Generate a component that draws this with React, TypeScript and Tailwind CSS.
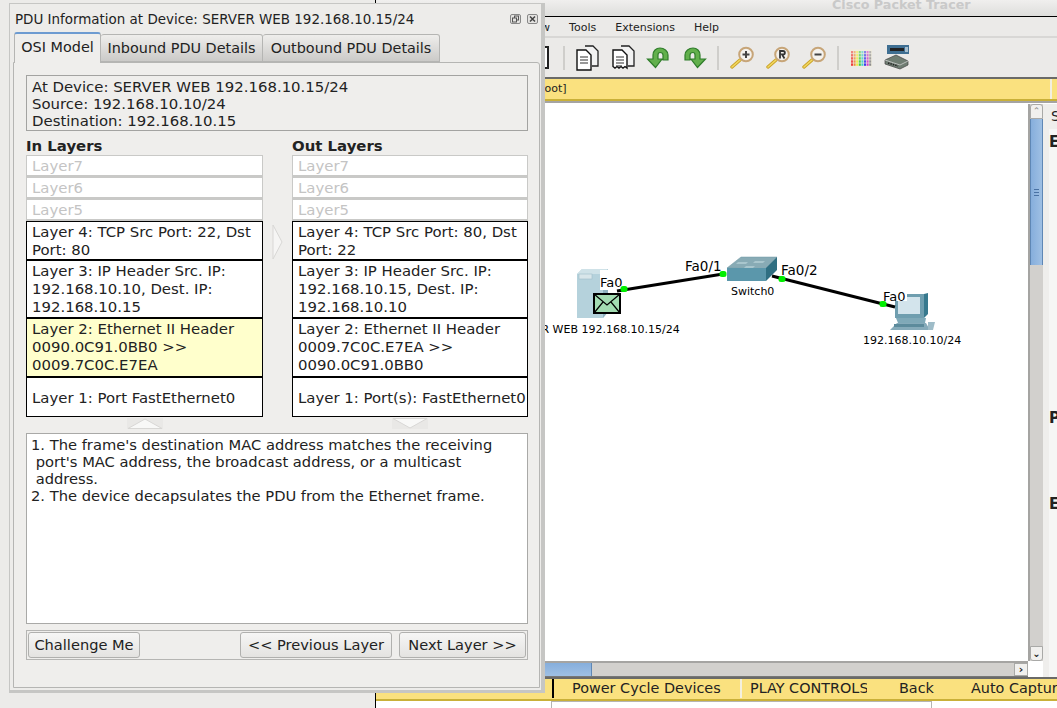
import React from "react";

const font = { fontFamily: '"DejaVu Sans", sans-serif' };

function Faded({ label }: { label: string }) {
  return (
    <div className="h-[22px] border border-[#c9c9c7] border-b-2 bg-white pl-[5px] pt-[1px] leading-[19px] text-[#c4c4c4]">{label}</div>
  );
}

function Row({ h, active, center, lines }: { h: string; active?: boolean; center?: boolean; lines: string[] }) {
  return (
    <div className={`${h} border border-black pl-[5px] leading-[18px] whitespace-pre ${active ? "bg-[#ffffcc]" : "bg-white"} ${center ? "flex items-center pt-[1px]" : "pt-[1px]"}`}>
      <div>
        {lines.map((l) => (
          <div key={l}>{l}</div>
        ))}
      </div>
    </div>
  );
}

function Column({ title, w, rows }: { title: string; w: string; rows: React.ReactNode }) {
  return (
    <div className={`${w} shrink-0`}>
      <div className="h-[19px] pt-[1px] font-bold leading-[19px]">{title}</div>
      <Faded label="Layer7" />
      <Faded label="Layer6" />
      <Faded label="Layer5" />
      {rows}
    </div>
  );
}

function Tab({ label, w, active }: { label: string; w: string; active?: boolean }) {
  return (
    <div
      className={`${w} shrink-0 border border-[#b5b5b3] rounded-t-[3px] text-center text-[14.4px] ${
        active
          ? "h-[31px] -mb-[1px] border-t-2 border-t-[#6d9bd1] border-b-0 bg-[#efeeec] leading-[27px] z-10"
          : "h-[28px] mt-[2px] border-l-0 bg-linear-to-b from-[#efeeec] to-[#cbcac8] leading-[27px]"
      }`}
    >
      {label}
    </div>
  );
}

function Btn({ label, w }: { label: string; w: string }) {
  return (
    <div className={`${w} h-[26px] border border-[#b0b0ae] rounded-[3px] bg-linear-to-b from-[#f6f6f5] to-[#e4e3e1] text-center text-[14.6px] leading-[24px]`}>{label}</div>
  );
}

function Doc({ back, torn }: { back?: boolean; torn?: boolean }) {
  return (
    <svg width="24" height="26" viewBox="0 0 24 26" className="shrink-0">
      <path d="M10 1h8l5 5v15h-6" fill="#f2f2f2" stroke="#222" strokeWidth="1.3" />
      <path
        d={torn ? "M2 5h9l5 5v13l-2-1.5-2 1.5-2-1.5-2 1.5-2-1.5-2 1.5-2-1.5z" : "M2 5h9l5 5v15H2z"}
        fill="#fff"
        stroke="#111"
        strokeWidth="1.4"
      />
      <path d="M5 12h8M5 15h8M5 18h8" stroke="#333" strokeWidth="1.1" />
      {back ? <path d="M5 21h6" stroke="#333" strokeWidth="1.1" /> : null}
    </svg>
  );
}

function Arrow({ flip }: { flip?: boolean }) {
  return (
    <svg width="24" height="23" viewBox="0 0 24 23" className="shrink-0">
      <g transform={flip ? "translate(24,0) scale(-1,1)" : undefined}>
        <path
          d="M7 13V9c0-4 3-7 7-7s8 3 8 7v5h-5V9c0-1.500-1.200-2.500-3-2.500S12 7.500 12 9v4h4l-6.500 8.500L1.500 13z"
          fill="#62b04c"
          stroke="#2f7d2a"
          strokeWidth="1.2"
        />
      </g>
    </svg>
  );
}

function Zoomer({ sign }: { sign: string }) {
  return (
    <svg width="25" height="23" viewBox="0 0 25 23" className="shrink-0">
      <path d="M2 21L10 14" stroke="#c9a227" strokeWidth="3.4" strokeLinecap="round" />
      <path d="M2 21L10 14" stroke="#f2d860" strokeWidth="1.6" strokeLinecap="round" />
      <circle cx="16" cy="8.500" r="6.800" fill="#f4f2ee" stroke="#c7a578" strokeWidth="2" />
      {sign === "+" ? <path d="M12.500 8.500h7M16 5v7" stroke="#444" strokeWidth="2" /> : null}
      {sign === "-" ? <path d="M12.500 8.500h7" stroke="#444" strokeWidth="2" /> : null}
      {sign === "R" ? (
        <path d="M14 12.500V5h3c2.500 0 2.500 3.500 0 3.500h-1l2.500 4" fill="none" stroke="#333" strokeWidth="1.800" />
      ) : null}
    </svg>
  );
}

function Palette() {
  const colors = ["#e33", "#e83", "#ee3", "#3c3", "#3cc", "#33e", "#c3c", "#888"];
  const rows = [0, 1, 2, 3, 4];
  return (
    <svg width="22" height="18" viewBox="0 0 22 18" className="shrink-0">
      <rect x="0" y="0" width="22" height="18" fill="#efece0" />
      {rows.map((r) =>
        colors.map((c, i) => (
          <rect key={`${r}-${i}`} x={1 + i * 2.600} y={2 + r * 3.100} width="2" height="2.400" fill={c} opacity={0.55 + r * 0.1} />
        ))
      )}
    </svg>
  );
}

function DeviceIcon() {
  return (
    <svg width="25" height="25" viewBox="0 0 25 25" className="shrink-0">
      <rect x="3" y="0" width="22" height="9" fill="#3f6f92" />
      <rect x="6" y="3" width="14" height="3" fill="#222" />
      <rect x="21" y="2" width="3" height="5" fill="#a8c0d0" />
      <path d="M1 15L12 10l12 6v4l-8 4-15-5z" fill="#6f7d72" stroke="#444" strokeWidth="0.7" />
      <path d="M1 15l15 5 8-4" fill="none" stroke="#ccc" strokeWidth="0.8" />
      <path d="M4 18l10 3" stroke="#222" strokeWidth="1.500" strokeDasharray="1.500 1" />
    </svg>
  );
}

function Sep({ mx }: { mx: string }) {
  return <div className={`${mx} h-[24px] w-[2px] shrink-0 bg-[#cfcecb]`} />;
}

function Port({ x, y }: { x: number; y: number }) {
  return <rect x={x - 3.5} y={y - 3} width="7" height="6" rx="2.500" fill="#00ee00" />;
}

function Network() {
  return (
    <svg width="483" height="556" viewBox="545 105 483 556" className="absolute left-[169px] top-0">
      {/* server */}
      <path d="M577 276l5-5h26v43l-5 6h-26z" fill="#b5d2dc" />
      <path d="M603 276l5-5v43l-5 6z" fill="#8fb2c0" />
      <path d="M577 276l5-5h26l-5 5z" fill="#cfe2e8" />
      <rect x="579" y="276" width="13" height="5" fill="#d8e6ea" stroke="#9fbcc8" strokeWidth="0.6" />
      <rect x="600" y="272" width="24" height="20" fill="#fff" />
      {/* switch */}
      <path d="M727 270l14-11h36l-11 12z" fill="#88abb5" stroke="#6f98a4" strokeWidth="0.5" />
      <path d="M738 264h10l-2 2h-10zM755 263h10l-2 2h-10zM746 268h9l-2 2h-9z" fill="#a9c6cd" />
      <rect x="727" y="270" width="39" height="13" fill="#5b97ab" />
      <path d="M766 270l11-11v13l-11 11z" fill="#2f6f82" />
      {/* pc */}
      <rect x="895" y="296" width="29" height="24" fill="#6f9eaf" />
      <rect x="898" y="299" width="22" height="17" fill="#d3e4ec" />
      <path d="M924 296l4-1v21l-4 4z" fill="#37798e" />
      <path d="M896 320h30l-1 5h-27z" fill="#7fa9b8" />
      <path d="M890 332l7-7h29l4 7z" fill="#86abba" />
      <path d="M928 324l7 0 -2 8h-5z" fill="#9ebcc8" />
      <rect x="894" y="326" width="30" height="3" fill="#5c8b9c" />
      <rect x="883" y="288" width="24" height="15" fill="#fff" />
      {/* links */}
      <path d="M617 293L723 276" stroke="#000" strokeWidth="3" />
      <path d="M772 278L895 309" stroke="#000" strokeWidth="3" />
      {/* envelope */}
      <rect x="594" y="296" width="26" height="19" fill="#a3dcb2" stroke="#000" strokeWidth="2" />
      <path d="M594 296l13 11 13-11M594 315l9-11M620 315l-9-11" fill="none" stroke="#000" strokeWidth="1.200" />
      {/* ports */}
      <Port x={624} y={291} />
      <Port x={723} y={276} />
      <Port x={782} y={281} />
      <Port x={883} y={306} />
    </svg>
  );
}

function Label({ text, cls }: { text: string; cls: string }) {
  return <div className={`absolute whitespace-nowrap text-black ${cls}`}>{text}</div>;
}

export default function App() {
  return (
    <div className="relative h-[708px] w-[1057px] overflow-hidden bg-[#ecebe9] text-[14.900px] text-[#222]" style={font}>
      {/* main application window */}
      <div className="ml-[375px] flex h-[708px] flex-col overflow-hidden border-l border-black">
        <div className="h-[17px] shrink-0 overflow-hidden border-b border-black bg-linear-to-b from-[#f0efee] to-[#dededc] pl-[456px] text-[12.700px] font-bold leading-[9px] text-[#c9c9c9]">
          Cisco Packet Tracer
        </div>
        <div className="flex h-[21px] shrink-0 items-center gap-[19px] border-b-2 border-[#d8d7d5] bg-[#ebeae8] pl-[148px] pt-[3px] text-[11px]">
          <span>View</span>
          <span>Tools</span>
          <span>Extensions</span>
          <span>Help</span>
        </div>
        <div className="flex h-[39px] shrink-0 items-center bg-[#ebeae8] pl-[164px]">
          <div className="h-[23px] w-[9px] shrink-0 border-2 border-[#222] bg-white" />
          <Sep mx="ml-[14px] mr-[10px]" />
          <Doc />
          <div className="w-[12px] shrink-0" />
          <Doc torn back />
          <div className="w-[11px] shrink-0" />
          <Arrow />
          <div className="w-[13px] shrink-0" />
          <Arrow flip />
          <Sep mx="ml-[10px] mr-[11px]" />
          <Zoomer sign="+" />
          <div className="w-[11px] shrink-0" />
          <Zoomer sign="R" />
          <div className="w-[11px] shrink-0" />
          <Zoomer sign="-" />
          <Sep mx="ml-[10px] mr-[11px]" />
          <Palette />
          <div className="w-[12px] shrink-0" />
          <DeviceIcon />
        </div>
        <div className="relative flex h-[24px] shrink-0 items-center border-y-2 border-t-[#6a6a68] border-b-[#c9b038] bg-[#fae17f] pl-[157px] text-[11px]">
          <span>[Root]</span>
          <div className="absolute left-[674px] top-0 h-[20px] w-[2px] bg-[#f2efe0]" />
        </div>
        <div className="flex min-h-0 flex-1 border-t-2 border-[#a5a4a2] bg-white">
          <div className="flex min-w-0 flex-1 flex-col">
            <div className="relative min-h-0 flex-1 overflow-hidden bg-white">
              <Network />
            </div>
          </div>
        </div>
      </div>

      {/* overlay of the canvas contents, placed on its free coordinates */}
      <Label text="Fa0" cls="left-[600px] top-[275px] text-[13px] leading-[15px]" />
      <Label text="Fa0/1" cls="left-[685px] top-[259px] text-[13.500px] leading-[15px]" />
      <Label text="Fa0/2" cls="left-[781px] top-[263px] text-[13.500px] leading-[15px]" />
      <Label text="Fa0" cls="left-[883px] top-[289px] text-[13px] leading-[15px]" />
      <Label text="Switch0" cls="left-[731px] top-[285px] text-[11px] leading-[14px]" />
      <Label text="SERVER WEB 192.168.10.15/24" cls="left-[506px] top-[323px] text-[11px] leading-[14px]" />
      <Label text="192.168.10.10/24" cls="left-[863px] top-[334px] text-[11px] leading-[14px]" />

      {/* vertical scrollbar and right panel */}
      <div className="absolute left-[1028px] top-[104px] flex h-[557px] w-[15px] flex-col border-l-2 border-[#a5a4a2] bg-[#d2d0cd]">
        <div className="flex h-[15px] items-center justify-center rounded-t-[3px] border border-[#a9a9a7] bg-[#f1f0ee] text-[9px] leading-none text-[#888]">⌃</div>
        <div className="flex h-[146px] flex-col items-center justify-center gap-[2px] border-x border-[#5f87b5] bg-linear-to-r from-[#86aedc] to-[#9fc0e4]">
          <div className="h-[1px] w-[5px] bg-[#4a72a4]" />
          <div className="h-[1px] w-[5px] bg-[#4a72a4]" />
          <div className="h-[1px] w-[5px] bg-[#4a72a4]" />
        </div>
        <div className="flex-1" />
        <div className="flex h-[15px] items-center justify-center rounded-b-[3px] border border-[#a9a9a7] bg-[#f1f0ee] text-[10px] font-bold leading-none">⌄</div>
      </div>
      <div className="absolute left-[1043px] top-[104px] h-[573px] w-[14px] overflow-hidden bg-[#efeeec]">
        <div className="h-[25px] pl-[8px] pt-[4px] text-[14px] leading-[16px]">S</div>
        <div className="ml-[6px] h-full bg-[#f6f6f5] text-[15px] font-bold">
          <div className="pt-[4px] leading-[18px]">E</div>
          <div className="pt-[258px] leading-[18px]">P</div>
          <div className="pt-[68px] leading-[18px]">E</div>
        </div>
      </div>

      {/* horizontal scrollbar */}
      <div className="absolute left-[545px] top-[661px] flex h-[16px] w-[483px] border-b border-[#777] border-t-2 border-t-[#a5a4a2] bg-[#d2d0cd]">
        <div className="h-full w-[47px] border-r border-[#5f87b5] bg-linear-to-b from-[#86aedc] to-[#9fc0e4]" />
        <div className="flex-1" />
        <div className="flex h-full w-[14px] items-center justify-center border border-[#a9a9a7] bg-[#f1f0ee] text-[11px] font-bold leading-none">›</div>
      </div>

      {/* bottom yellow bar */}
      <div className="absolute left-[376px] top-[677px] flex h-[24px] w-[681px] items-center border-t-2 border-b-2 border-t-[#6a6a68] border-b-[#c9b038] bg-[#fae17f] pb-[1px] text-[14.400px]">
        <div className="ml-[176px] h-[19px] w-[2px] shrink-0 bg-black" />
        <div className="ml-[18px] w-[168px] shrink-0 whitespace-nowrap">Power Cycle Devices</div>
        <div className="h-[19px] w-[2px] shrink-0 bg-[#f4f0de]" />
        <div className="ml-[8px] w-[117px] shrink-0 overflow-hidden whitespace-nowrap">PLAY CONTROLS</div>
        <div className="ml-[32px] w-[72px] shrink-0">Back</div>
        <div className="whitespace-nowrap">Auto Capture</div>
      </div>
      <div className="absolute left-[551px] top-[701px] h-[7px] w-[381px] border-x border-t border-[#b5b5b3] bg-white" />

      {/* PDU window */}
      <div className="absolute left-[9px] top-[3px] flex h-[690px] w-[536px] flex-col border border-[#c6c6c4] border-b-[3px] border-r-[4px] bg-[#edecea]">
        <div className="flex h-[28px] shrink-0 items-center justify-between pl-[5px] pr-[3px] pt-[4px] text-[13.450px]">
          <span>PDU Information at Device: SERVER WEB 192.168.10.15/24</span>
          <div className="flex gap-[6px] pb-[4px] pt-[1px]">
            <svg width="11" height="10" viewBox="0 0 11 10" className="shrink-0">
              <rect x="0.500" y="0.500" width="10" height="9" rx="1.500" fill="#e4e3e1" stroke="#888" />
              <rect x="4.500" y="2" width="4" height="4" fill="none" stroke="#555" />
              <rect x="2.500" y="4" width="4" height="4" fill="#e4e3e1" stroke="#555" />
            </svg>
            <svg width="11" height="10" viewBox="0 0 11 10" className="shrink-0">
              <rect x="0.500" y="0.500" width="10" height="9" rx="1.500" fill="#e4e3e1" stroke="#888" />
              <path d="M3 2.500l5 5M8 2.500l-5 5" stroke="#444" strokeWidth="1.500" />
            </svg>
          </div>
        </div>
        <div className="flex h-[30px] shrink-0 pl-[4px]">
          <Tab label="OSI Model" w="w-[87px]" active />
          <Tab label="Inbound PDU Details" w="w-[162px]" />
          <Tab label="Outbound PDU Details" w="w-[177px]" />
        </div>
        <div className="ml-[3px] h-[626px] w-[527px] shrink-0 rounded-tr-[3px] border border-[#b5b5b3] bg-[#efeeec] pl-[12px] pt-[12px]">
          <div className="h-[56px] w-[502px] border border-[#a3a3a1] pl-[5px] pt-[3px] leading-[17px]">
            <div>At Device: SERVER WEB 192.168.10.15/24</div>
            <div>Source: 192.168.10.10/24</div>
            <div>Destination: 192.168.10.15</div>
          </div>
          <div className="mt-[5px] flex">
            <Column
              title="In Layers"
              w="w-[237px]"
              rows={
                <>
                  <Row h="h-[39px]" lines={["Layer 4: TCP Src Port: 22, Dst", "Port: 80"]} />
                  <Row h="h-[58px]" lines={["Layer 3: IP Header Src. IP:", "192.168.10.10, Dest. IP:", "192.168.10.15"]} />
                  <Row h="h-[59px]" active lines={["Layer 2: Ethernet II Header", "0090.0C91.0BB0 >>", "0009.7C0C.E7EA"]} />
                  <Row h="h-[40px]" center lines={["Layer 1: Port FastEthernet0"]} />
                </>
              }
            />
            <div className="w-[29px] shrink-0 pl-[9px] pt-[88px]">
              <svg width="12" height="36" viewBox="0 0 12 36">
                <path d="M1 1l9 17-9 17z" fill="#f6f5f4" stroke="#d8d7d5" />
              </svg>
            </div>
            <Column
              title="Out Layers"
              w="w-[236px]"
              rows={
                <>
                  <Row h="h-[39px]" lines={["Layer 4: TCP Src Port: 80, Dst", "Port: 22"]} />
                  <Row h="h-[58px]" lines={["Layer 3: IP Header Src. IP:", "192.168.10.15, Dest. IP:", "192.168.10.10"]} />
                  <Row h="h-[59px]" lines={["Layer 2: Ethernet II Header", "0009.7C0C.E7EA >>", "0090.0C91.0BB0"]} />
                  <Row h="h-[40px]" center lines={["Layer 1: Port(s): FastEthernet0"]} />
                </>
              }
            />
          </div>
          <div className="flex h-[16px] w-[502px]">
            <div className="flex w-[237px] justify-center pt-[1px]">
              <svg width="36" height="11" viewBox="0 0 36 11">
                <rect width="36" height="11" fill="#e9e8e6" />
                <path d="M1 10.500L18 1l17 9.500z" fill="#f8f8f7" stroke="#d8d7d5" />
              </svg>
            </div>
            <div className="ml-[29px] flex w-[236px] justify-center pt-[1px]">
              <svg width="36" height="11" viewBox="0 0 36 11">
                <rect width="36" height="11" fill="#e9e8e6" />
                <path d="M1 0.500L18 10l17-9.500z" fill="#f8f8f7" stroke="#d8d7d5" />
              </svg>
            </div>
          </div>
          <div className="h-[191px] w-[502px] whitespace-pre border border-[#a9a9a7] bg-white pl-[4px] pt-[2px] text-[14.700px] leading-[17px]">
            {"1. The frame's destination MAC address matches the receiving\n port's MAC address, the broadcast address, or a multicast\n address.\n2. The device decapsulates the PDU from the Ethernet frame."}
          </div>
          <div className="mt-[6px] flex h-[30px] w-[502px] items-center border border-[#b5b5b3] pl-[1px] pr-[1px]">
            <Btn label="Challenge Me" w="w-[112px]" />
            <div className="flex-1" />
            <Btn label="<< Previous Layer" w="w-[152px]" />
            <div className="w-[7px]" />
            <Btn label="Next Layer >>" w="w-[127px]" />
          </div>
        </div>
      </div>
    </div>
  );
}
